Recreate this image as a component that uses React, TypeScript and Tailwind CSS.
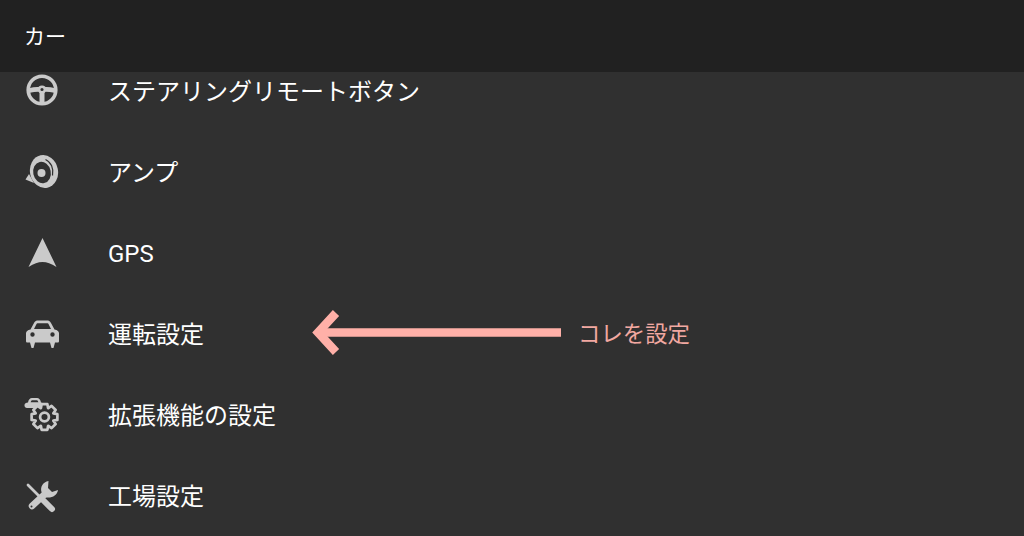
function SteeringIcon() {
  return (
    <svg viewBox="0 0 40 40" className="h-10 w-10" fill="none" stroke="#cacaca">
      <circle cx="20" cy="18" r="13.8" strokeWidth="3.6" />
      <path d="M6 19 C12 16.5 28 16.5 34 19" strokeWidth="4.6" />
      <path d="M20 18 V31" strokeWidth="5" />
      <circle cx="20" cy="17.5" r="2.8" fill="#303030" strokeWidth="2.4" />
    </svg>
  );
}

function AmpIcon() {
  return (
    <svg viewBox="0 0 40 40" className="h-10 w-10" fill="none">
      <path d="M7 21 L3.5 26.5 L12 30 Z" fill="#cacaca" />
      <ellipse cx="22" cy="18.5" rx="14" ry="16.5" transform="rotate(-12 22 18.5)" fill="#cacaca" />
      <ellipse cx="20" cy="19.5" rx="8.8" ry="10.8" transform="rotate(-12 20 19.5)" fill="#303030" />
      <path d="M23.5 6.5 C29 9 32 15.5 30.5 22.5" stroke="#303030" strokeWidth="1.2" />
      <circle cx="19.5" cy="20" r="4" fill="#cacaca" />
    </svg>
  );
}

function GpsIcon() {
  return (
    <svg viewBox="0 0 40 40" className="h-10 w-10">
      <path d="M20.5 4 L34.5 33 C29 29.5 25 28 20.5 28 C16 28 12 29.5 6.5 33 Z" fill="#cacaca" />
    </svg>
  );
}

function CarIcon() {
  return (
    <svg viewBox="0 0 40 40" className="h-10 w-10">
      <path
        fillRule="evenodd"
        d="M12 8 C13 6 14.5 5.5 16 5.5 H25 C26.5 5.5 28 6 29 8 L32.5 14.5 C35.5 15 37 16.5 37 18.5 V26 C37 27 36.5 27.5 35.5 27.5 H33 L31.5 33 H29.5 L28 27.5 H13 L11.5 33 H9.5 L8 27.5 H5.5 C4.5 27.5 4 27 4 26 V18.5 C4 16.5 5.5 15 8.5 14.5 Z M12 14 H29 L26.5 9 C26.3 8.5 26 8.2 25.5 8.2 H15.5 C15 8.2 14.7 8.5 14.5 9 Z M10.5 17.3 A2.2 2.2 0 1 0 10.5 21.7 A2.2 2.2 0 1 0 10.5 17.3 Z M30.5 17.3 A2.2 2.2 0 1 0 30.5 21.7 A2.2 2.2 0 1 0 30.5 17.3 Z"
        fill="#cacaca"
      />
    </svg>
  );
}

// hollow 8 tooth cog, points worked out from the angles
function gearPoints(cx: number, cy: number) {
  const pts: string[] = [];
  for (let i = 0; i < 8; i++) {
    const a = (i * Math.PI) / 4;
    const steps: [number, number][] = [
      [9.6, -0.38],
      [13.2, -0.22],
      [13.2, 0.22],
      [9.6, 0.38],
    ];
    for (const [r, d] of steps) {
      pts.push(`${(cx + r * Math.sin(a + d)).toFixed(2)},${(cy - r * Math.cos(a + d)).toFixed(2)}`);
    }
  }
  return pts.join(' ');
}

function ExtIcon() {
  return (
    <svg viewBox="0 0 40 40" className="h-10 w-10" fill="none" stroke="#cacaca">
      <path
        fillRule="evenodd"
        d="M6 6.5 C6.5 3.5 8 2 10 2 H15 C17 2 18.5 3.5 19 6.5 C21 7 22 8 22 10 V12 H5 C3.5 12 2.5 11 2.5 9.5 V9 C2.5 7.5 4 6.8 6 6.5 Z M8.6 6.3 H16.4 C16 4.8 15.4 4.2 14.5 4.2 H10.5 C9.6 4.2 9 4.8 8.6 6.3 Z"
        fill="#cacaca"
        stroke="none"
      />
      <polygon points={gearPoints(22.5, 21)} fill="#303030" strokeWidth="2.7" strokeLinejoin="round" />
      <circle cx="22.5" cy="21" r="4.4" strokeWidth="2.7" />
    </svg>
  );
}

function ToolsIcon() {
  return (
    <svg viewBox="0 0 40 40" className="h-10 w-10" fill="none" stroke="#cacaca" strokeLinecap="round">
      <path d="M6 8 L20 22" strokeWidth="2.8" />
      <path d="M21 23 L30 32" strokeWidth="6" />
      <path d="M10 29 L24 16" strokeWidth="6.5" />
      <path
        d="M26.5 4 C21 5 18 10 19.5 15 L22 20 C29 22 35 19 36 13 L30 15 L26 11 Z"
        fill="#cacaca"
        stroke="none"
      />
      <circle cx="9.5" cy="29.5" r="1" fill="#303030" stroke="none" />
    </svg>
  );
}

const rows = [
  { label: 'ステアリングリモートボタン', icon: <SteeringIcon /> },
  { label: 'アンプ', icon: <AmpIcon /> },
  { label: 'GPS', icon: <GpsIcon /> },
  { label: '運転設定', icon: <CarIcon /> },
  { label: '拡張機能の設定', icon: <ExtIcon /> },
  { label: '工場設定', icon: <ToolsIcon /> },
];

export default function App() {
  return (
    <div className="relative flex h-[536px] w-[1024px] flex-col overflow-hidden bg-[#303030] font-['Roboto','Noto_Sans_CJK_JP',sans-serif] text-white">
      {/* header sits over the scrolled list */}
      <header className="relative z-10 flex h-[72px] shrink-0 items-center bg-[#212121] pl-[24px] pt-[3px] text-[21px]">
        カー
      </header>

      <ul className="mt-[-21px]">
        {rows.map((row) => (
          <li key={row.label} className="flex h-[81px] items-center">
            <div className="w-[108px] shrink-0 pl-[22px]">{row.icon}</div>
            <span className="text-[24px]">{row.label}</span>
          </li>
        ))}
      </ul>

      {/* annotation pasted on top of the screenshot */}
      <div className="absolute left-[312px] top-[310px] flex items-center text-[#f2a8a1]">
        <svg viewBox="0 0 250 48" className="h-12 w-[250px]" fill="none" stroke="#ffb0a8">
          <path d="M249 22.5 H8" strokeWidth="8.5" />
          <path d="M24 3 L6 22.5 L24 42" strokeWidth="8.5" />
        </svg>
        <span className="ml-[16px] pt-[2px] text-[22.4px]">コレを設定</span>
      </div>
    </div>
  );
}
